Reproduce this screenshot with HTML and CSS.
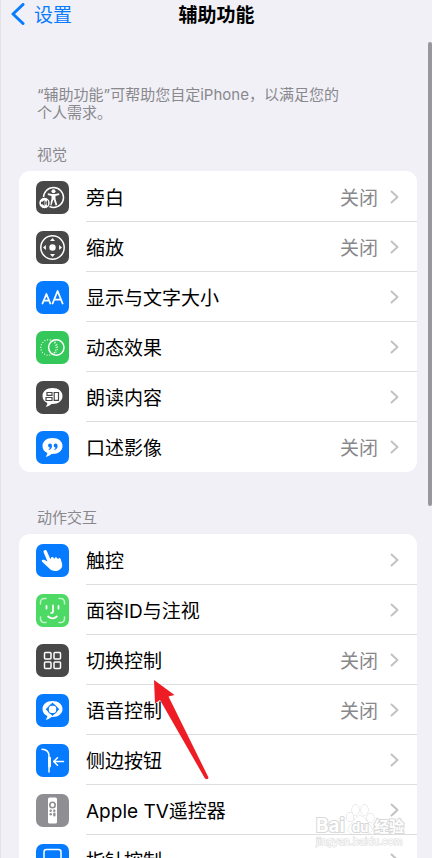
FILE: index.html
```html
<!DOCTYPE html>
<html lang="zh-CN">
<head>
<meta charset="utf-8">
<meta name="viewport" content="width=device-width, initial-scale=1">
<title>辅助功能</title>
<link rel="stylesheet" href="styles.css">
</head>
<body>
<div class="screen">
  <header class="nav">
    <a class="back" href="#">
      <svg class="back-icon" viewBox="0 0 14 22" aria-hidden="true"><path d="M12 1.500 2 11l10 9.500"/></svg>
      <span>设置</span>
    </a>
    <h1 class="title">辅助功能</h1>
  </header>

  <main class="content">
    <p class="intro">“辅助功能”可帮助您自定iPhone，以满足您的个人需求。</p>

    <h2 class="section-title">视觉</h2>
    <ul class="card">
      <li><a class="row" href="#">
        <svg class="icon dark" viewBox="0 0 33 33" aria-hidden="true"><circle class="line" cx="17.500" cy="16.500" r="10"/><circle class="fill" cx="17.500" cy="10.300" r="2"/><path class="fill" d="M11.800 12.300 16 13h3l4.200-.7v1.700l-3.700 1v3l1.800 6-1.700.5-1.900-5.700h-.4l-1.900 5.700-1.700-.5 1.800-6v-3l-3.700-1z"/><circle class="badge" cx="8.500" cy="22" r="5.700"/><path class="ink-dark" d="M5 20.800h1.500l2-1.900v6.200l-2-1.900H5z"/><path class="stroke-dark" d="M9.800 20.500v3M11.500 19.500v5"/></svg>
        <span class="label"><span class="name">旁白</span><span class="value">关闭</span><svg class="chevron" viewBox="0 0 9 14" aria-hidden="true"><path d="m1.500 1.500 6 5.500-6 5.500"/></svg></span>
      </a></li>
      <li><a class="row" href="#">
        <svg class="icon dark" viewBox="0 0 33 33" aria-hidden="true"><circle class="line" cx="16.500" cy="16.500" r="11.700"/><circle class="fill" cx="16.500" cy="16.500" r="3.200"/><path class="fill" d="m16.500 7 2.500 2.900h-5zM16.500 26l2.500-2.900h-5zM7 16.500l2.900-2.500v5zM26 16.500l-2.900-2.500v5z"/></svg>
        <span class="label"><span class="name">缩放</span><span class="value">关闭</span><svg class="chevron" viewBox="0 0 9 14" aria-hidden="true"><path d="m1.500 1.500 6 5.500-6 5.500"/></svg></span>
      </a></li>
      <li><a class="row" href="#">
        <svg class="icon blue" viewBox="0 0 33 33" aria-hidden="true"><path class="line letters" d="m6.500 22.500 3.900-9.500 3.900 9.500M7.800 19.700h5.200M16.600 22.500l5-12.500 5 12.500M18.200 18.700h6.800"/></svg>
        <span class="label"><span class="name">显示与文字大小</span><svg class="chevron" viewBox="0 0 9 14" aria-hidden="true"><path d="m1.500 1.500 6 5.500-6 5.500"/></svg></span>
      </a></li>
      <li><a class="row" href="#">
        <svg class="icon green" viewBox="0 0 33 33" aria-hidden="true"><circle class="line dots" cx="12.500" cy="16.500" r="7.700"/><path class="line dots" d="M17 9.500a7.700 7.700 0 0 1 0 14"/><circle class="line" cx="20.300" cy="16.500" r="7.700"/></svg>
        <span class="label"><span class="name">动态效果</span><svg class="chevron" viewBox="0 0 9 14" aria-hidden="true"><path d="m1.500 1.500 6 5.500-6 5.500"/></svg></span>
      </a></li>
      <li><a class="row" href="#">
        <svg class="icon dark" viewBox="0 0 33 33" aria-hidden="true"><path class="fill" d="M16.500 7C10.500 7 6.500 10.500 6.500 15c0 3.200 1.800 5.600 4.800 7 .1 1.200-.5 2.400-1.700 3.700 2.500-.2 4.500-1.200 5.800-2.700h1.100c6 0 10-3.500 10-8s-4-8-10-8z"/><path class="stroke-dark" d="M11 11.500h5v2.800h-5zM10 16.500h6v3h-6zM18.200 11.500h4.300v7.800h-4.300z"/></svg>
        <span class="label"><span class="name">朗读内容</span><svg class="chevron" viewBox="0 0 9 14" aria-hidden="true"><path d="m1.500 1.500 6 5.500-6 5.500"/></svg></span>
      </a></li>
      <li><a class="row" href="#">
        <svg class="icon blue" viewBox="0 0 33 33" aria-hidden="true"><path class="fill" d="M16.500 7C10.500 7 6.500 10.500 6.500 15c0 3.200 1.800 5.600 4.800 7 .1 1.200-.5 2.400-1.700 3.700 2.500-.2 4.500-1.200 5.800-2.700h1.100c6 0 10-3.500 10-8s-4-8-10-8z"/><path class="ink-blue" d="M13.800 12.600a2.200 2.200 0 0 1 2.200 2.300c0 2-1.200 3.500-3 4l-.4-.8c.9-.3 1.500-.8 1.700-1.500a2 2 0 1 1-.5-4zM19.400 12.600a2.200 2.200 0 0 1 2.200 2.300c0 2-1.200 3.500-3 4l-.4-.8c.9-.3 1.500-.8 1.700-1.500a2 2 0 1 1-.5-4z"/></svg>
        <span class="label"><span class="name">口述影像</span><span class="value">关闭</span><svg class="chevron" viewBox="0 0 9 14" aria-hidden="true"><path d="m1.500 1.500 6 5.500-6 5.500"/></svg></span>
      </a></li>
    </ul>

    <h2 class="section-title">动作交互</h2>
    <ul class="card">
      <li><a class="row" href="#">
        <svg class="icon blue" viewBox="0 0 33 33" aria-hidden="true"><path class="fill" d="M8.700 6.200c1-.4 1.800.1 2.200 1.100l3.300 7.500.7-.2c-.2-1.600 2-2.300 2.900-.6l.4.800.5-.2c0-1.500 1.900-1.900 2.700-.3l.4.800.5-.2c.1-1.300 1.800-1.400 2.400.1l1.200 4c1.100 3.800-.6 6.300-3.800 7.400-3.500 1.200-6.800.2-9-2.200l-6.700-6.100c-1.500-1.400-.2-3 1.600-2.300l3.500 1.700L7.600 8.200c-.4-.9.200-1.700 1.100-2z"/></svg>
        <span class="label"><span class="name">触控</span><svg class="chevron" viewBox="0 0 9 14" aria-hidden="true"><path d="m1.500 1.500 6 5.500-6 5.500"/></svg></span>
      </a></li>
      <li><a class="row" href="#">
        <svg class="icon lime" viewBox="0 0 33 33" aria-hidden="true"><path class="line faint" d="M4.500 10V8a3.500 3.500 0 0 1 3.500-3.500h2M23 4.500h2A3.500 3.500 0 0 1 28.500 8v2M28.500 23v2a3.500 3.500 0 0 1-3.500 3.500h-2M10 28.500H8A3.500 3.500 0 0 1 4.500 25v-2"/><path class="line letters" d="M10.500 12v2.500M22.500 12v2.500M17 11.500v6c0 1-.6 1.400-1.800 1.400M12.200 22.500c2.500 2.400 6.100 2.400 8.600 0"/></svg>
        <span class="label"><span class="name">面容ID与注视</span><svg class="chevron" viewBox="0 0 9 14" aria-hidden="true"><path d="m1.500 1.500 6 5.500-6 5.500"/></svg></span>
      </a></li>
      <li><a class="row" href="#">
        <svg class="icon dark" viewBox="0 0 33 33" aria-hidden="true"><g class="line"><rect x="8.500" y="8.500" width="6.500" height="6.500" rx="1"/><rect x="18" y="8.500" width="6.500" height="6.500" rx="1"/><rect x="8.500" y="18" width="6.500" height="6.500" rx="1"/><rect x="18" y="18" width="6.500" height="6.500" rx="1"/></g></svg>
        <span class="label"><span class="name">切换控制</span><span class="value">关闭</span><svg class="chevron" viewBox="0 0 9 14" aria-hidden="true"><path d="m1.500 1.500 6 5.500-6 5.500"/></svg></span>
      </a></li>
      <li><a class="row" href="#">
        <svg class="icon blue" viewBox="0 0 33 33" aria-hidden="true"><path class="fill" d="M16.500 7C10.500 7 6.500 10.500 6.500 15c0 3.200 1.800 5.600 4.800 7 .1 1.200-.5 2.400-1.700 3.700 2.500-.2 4.500-1.200 5.800-2.700h1.100c6 0 10-3.500 10-8s-4-8-10-8z"/><path class="ink-blue" d="m16.500 8.500 2.800 2.900h-5.600zM16.500 22l2.800-2.900h-5.600zM9.700 15.300l2.900-2.800v5.600zM23.300 15.300l-2.900-2.800v5.600z"/><circle class="stroke-blue" cx="16.500" cy="15.300" r="4.500"/></svg>
        <span class="label"><span class="name">语音控制</span><span class="value">关闭</span><svg class="chevron" viewBox="0 0 9 14" aria-hidden="true"><path d="m1.500 1.500 6 5.500-6 5.500"/></svg></span>
      </a></li>
      <li><a class="row" href="#">
        <svg class="icon blue" viewBox="0 0 33 33" aria-hidden="true"><path class="line" d="M6 5.300c4.500.2 7 2.400 7 6.700v16M27.500 17.500H18M21.500 13.700 17.700 17.500l3.800 3.800"/><path class="line thick" d="M13.500 14v8"/></svg>
        <span class="label"><span class="name">侧边按钮</span><svg class="chevron" viewBox="0 0 9 14" aria-hidden="true"><path d="m1.500 1.500 6 5.500-6 5.500"/></svg></span>
      </a></li>
      <li><a class="row" href="#">
        <svg class="icon gray" viewBox="0 0 33 33" aria-hidden="true"><rect class="fill" x="12" y="3.500" width="9" height="26" rx="1.500"/><circle class="stroke-gray" cx="16.500" cy="11" r="2.700"/><g class="ink-gray"><circle cx="14.700" cy="16.700" r="1.200"/><circle cx="18.300" cy="16.700" r="1.200"/><circle cx="14.700" cy="20.300" r="1.200"/><rect x="17.200" y="18.500" width="2.300" height="4" rx="1.100"/></g></svg>
        <span class="label"><span class="name">Apple TV遥控器</span><svg class="chevron" viewBox="0 0 9 14" aria-hidden="true"><path d="m1.500 1.500 6 5.500-6 5.500"/></svg></span>
      </a></li>
      <li><a class="row" href="#">
        <svg class="icon blue" viewBox="0 0 33 33" aria-hidden="true"><rect class="line" x="8" y="5.500" width="17" height="21" rx="2.500"/></svg>
        <span class="label"><span class="name">指针控制</span><svg class="chevron" viewBox="0 0 9 14" aria-hidden="true"><path d="m1.500 1.500 6 5.500-6 5.500"/></svg></span>
      </a></li>
    </ul>
  </main>

  <div class="scrollbar"></div>

  <svg class="arrow" viewBox="0 0 58 101" aria-hidden="true"><path d="M2 0 22.500 15l-6 1.500L56.500 97.500Q56 100.500 53 98.500L8 20l-5 3.500z"/></svg>

  <svg class="watermark" viewBox="0 0 96 46" role="img" aria-label="Baidu 经验 jingyan.baidu.com">
    <g><ellipse cx="36" cy="14" rx="3.500" ry="4.500"/><ellipse cx="41.500" cy="7" rx="3.500" ry="5.500"/><ellipse cx="50.500" cy="7" rx="3.500" ry="5.500"/><ellipse cx="56.500" cy="15" rx="3.500" ry="4.500"/><path d="M46 13c5 0 6 5 9 8 5 5 3 10-3 10H40c-6 0-8-5-3-10 4-3 4-8 9-8z"/></g>
    <text class="mark-large" x="2" y="29">Bai</text>
    <text class="mark-small" x="38" y="29">du</text>
    <text class="mark-cjk" x="60" y="29">经验</text>
    <text class="mark-url" x="2" y="42">jingyan.baidu.com</text>
  </svg>
</div>
</body>
</html>
```
FILE: styles.css
```css
* {
  box-sizing: border-box;
}

body {
  margin: 0;
  background: #f1f0f6;
  color: #000;
  font-family: Inter, "Noto Sans CJK SC", sans-serif;
}

a {
  color: inherit;
  text-decoration: none;
}

.screen {
  position: relative;
  height: 100vh;
  overflow: hidden;
  border-left: 1px solid #e3e3e8;
}

.nav {
  display: grid;
  grid-template-columns: 1fr auto 1fr;
  align-items: center;
  height: 28px;
  padding: 0 10px;
}

.back {
  display: flex;
  align-items: center;
  gap: 9px;
  color: #087cff;
  font-size: 19px;
  line-height: 28px;
}

.back span,
.title {
  padding-top: 4px;
  line-height: 24px;
}

.name,
.value {
  padding-top: 4px;
}

.back-icon {
  width: 14px;
  height: 22px;
  fill: none;
  stroke: currentColor;
  stroke-width: 3;
  stroke-linecap: round;
  stroke-linejoin: round;
}

.title {
  margin: 0;
  font-size: 19px;
  font-weight: 700;
}

.content {
  padding: 58px 15px 0 18px;
}

.intro {
  margin: 0;
  padding: 0 74px 0 18px;
  color: #88888d;
  font-size: 15px;
  line-height: 18px;
}

.section-title {
  margin: 0;
  padding: 22px 18px 5px;
  color: #88888d;
  font-size: 15px;
  font-weight: 400;
  line-height: 22px;
}

.card {
  margin: 0;
  padding: 1px 0 0;
  list-style: none;
  background: #fff;
  border-radius: 11px;
}

.card + .section-title {
  padding-top: 35px;
}

.row {
  display: flex;
  align-items: center;
  gap: 17px;
  height: 50px;
  padding-left: 17px;
}

.icon {
  flex: none;
  width: 33px;
  height: 33px;
  border-radius: 7px;
}

.dark { background: #484848; }
.blue { background: #067bff; }
.green { background: #34c759; }
.lime { background: #4cd964; }
.gray { background: #8e8e93; }

.label {
  display: flex;
  flex: 1;
  align-items: center;
  height: 50px;
  padding-right: 18px;
  border-bottom: 1px solid #dedee0;
  font-size: 19px;
  line-height: 28px;
}

li:last-child .label {
  border-bottom-color: transparent;
}

.name {
  flex: 1;
}

.value {
  margin-right: 12px;
  color: #88888b;
}

.chevron {
  width: 9px;
  height: 14px;
  fill: none;
  stroke: #c2c2c5;
  stroke-width: 2;
  stroke-linecap: round;
  stroke-linejoin: round;
}

.fill { fill: #fff; }

.line {
  fill: none;
  stroke: #fff;
  stroke-width: 1.5;
  stroke-linecap: round;
  stroke-linejoin: round;
}

.letters { stroke-width: 1.8; }
.thick { stroke-width: 3; }
.faint { stroke: #c5f3cc; }

.dots {
  stroke-width: 1.3;
  stroke-dasharray: 0 2.7;
}

.badge {
  fill: #fff;
  stroke: #484848;
}

.ink-dark { fill: #484848; }
.ink-blue { fill: #067bff; }
.ink-gray { fill: #8e8e93; }

.stroke-dark,
.stroke-blue,
.stroke-gray {
  fill: none;
  stroke: #484848;
  stroke-width: 1.2;
}

.stroke-blue { stroke: #067bff; }

.stroke-gray {
  stroke: #8e8e93;
  stroke-width: 1.6;
}

.scrollbar {
  position: absolute;
  top: 42px;
  right: 0;
  width: 4px;
  height: 464px;
  border-radius: 2px;
  background: #98979d;
}

.arrow {
  position: absolute;
  top: 680px;
  left: 151px;
  width: 58px;
  height: 101px;
  fill: #ee1c25;
}

.watermark {
  position: absolute;
  top: 803px;
  left: 313px;
  width: 96px;
  height: 46px;
  fill: #fff;
  stroke: #d8d8d8;
  stroke-width: 1;
  paint-order: stroke;
}

.mark-large {
  font-size: 19px;
  font-weight: 700;
  stroke-width: 2;
}

.mark-small {
  font-size: 13px;
  font-weight: 700;
  stroke-width: 2;
}

.mark-cjk {
  font-size: 15px;
  font-weight: 700;
  stroke-width: 2;
}

.mark-url {
  font-size: 10px;
  stroke-width: 1;
}
```
